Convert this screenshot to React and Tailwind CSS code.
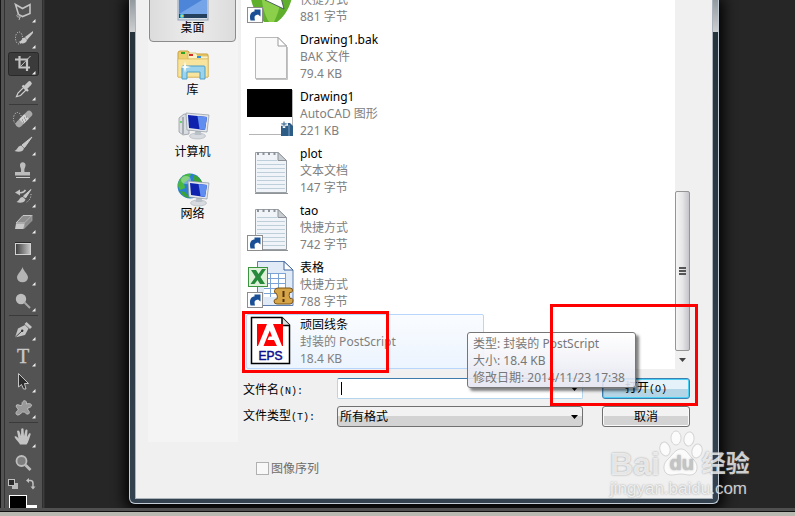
import React, { useState } from 'react';
import clsx from 'clsx';

const UI_FONT = "font-['Noto_Sans','Noto_Sans_CJK_SC',sans-serif]";

/* ---------- Toolbar icons, drawn in a 37x26 cell ---------- */

const TOOL_ICONS = {
  lasso: (
    <>
      <path d="M10.5 5.5 17.5 9.5 25 5.5V14.5L17.5 17.5 13.5 15.5Z" fill="none" stroke="#c4c4c4" strokeWidth="1.6" />
      <path d="M14 15.5c-3 0-3 2.500 0 2.500s3-1 1.500-1.500M15 18l-1 3" fill="none" stroke="#b4b4b4" />
    </>
  ),
  quickSelect: (
    <>
      <ellipse cx="14" cy="13" rx="3.500" ry="6" fill="none" stroke="#d8d8d8" strokeDasharray="1 1.500" />
      <path d="M28 6 20 12l2 3 6-7Z" fill="#c9c9c9" />
      <path d="M20 12.500c-3 0-3 3.500-6.500 4.500 3 2.500 8 1.500 8.500-2Z" fill="#c9c9c9" />
    </>
  ),
  crop: (
    <>
      <path d="M14.500 5V16.500H25M10 8.500H22V20" fill="none" stroke="#c4c4c4" strokeWidth="2.200" />
      <path d="M15.500 15.500 25.500 5" stroke="#c4c4c4" />
    </>
  ),
  eyedropper: (
    <>
      <path d="M11.500 19.500 13 16l6-6 2.500 2.500-6 6Z" fill="#4a4a4a" stroke="#cfcfcf" strokeWidth="1.200" />
      <path d="M17.500 8.500 23 14" stroke="#d0d0d0" strokeWidth="2.200" />
      <path d="M20.500 10.500 24.500 6.500" stroke="#c6c6c6" strokeWidth="4.500" strokeLinecap="round" />
    </>
  ),
  heal: (
    <>
      <ellipse cx="12.500" cy="12.500" rx="4" ry="6" fill="none" stroke="#d8d8d8" strokeDasharray="1 1.500" />
      <path d="M14 18 24 8" stroke="#a8a8a8" strokeWidth="6.500" strokeLinecap="round" />
      <path d="M16.500 15.500 21.500 10.500" stroke="#d4d4d4" strokeWidth="6.500" />
      <path d="M17 14h1M19 12h1M20 14h1M18 16h1M21 11h1" stroke="#6a6a6a" />
    </>
  ),
  brush: (
    <>
      <path d="M27 5 17 13l2.500 2.500Z" fill="#cacaca" stroke="#cacaca" />
      <path d="M16.500 13.500c-4 0-3.500 4-7 5.500 4 1.500 9 1 9.500-3Z" fill="#c4c4c4" />
    </>
  ),
  stamp: (
    <>
      <path d="M15 7.500a2.800 2.800 0 1 1 5.500 0c0 2-1.500 2.500-1 6.500h5.500v3.500H10V14h6c.5-4-1-4.500-1-6.500Z" fill="#bcbcbc" />
      <path d="M11 19.500h14" stroke="#cfcfcf" />
    </>
  ),
  history: (
    <>
      <path d="M14 8.500c3 .5 5 0 6.500-2.500" fill="none" stroke="#c4c4c4" strokeWidth="1.500" />
      <path d="M10 8.500 15 5.500V11.500Z" fill="#c4c4c4" />
      <path d="M26 5.500 18.500 12l2 2Z" fill="#cacaca" stroke="#cacaca" />
      <path d="M18 13c-4 0-3 3.500-6.500 5 3.500 1.500 8 1 9-2.500Z" fill="#c4c4c4" />
      <path d="M26 10q0 6-5 8.500" fill="none" stroke="#d8d8d8" strokeDasharray="1 1.500" />
    </>
  ),
  eraser: (
    <>
      <path d="M18 5.500H27L19.500 13H11Z" fill="#8d8d8d" stroke="#c8c8c8" />
      <path d="M27 5.500V10.500L19 18.500 19.500 13Z" fill="#8a8a8a" stroke="#aaa" strokeWidth=".7" />
      <path d="M11 13.500H19.500L18.500 19H10Z" fill="#c9c9c9" />
    </>
  ),
  gradient: (
    <>
      <defs>
        <linearGradient id="toolGradient">
          <stop stopColor="#3c3c3c" />
          <stop offset="1" stopColor="#c8c8c8" />
        </linearGradient>
      </defs>
      <path d="M10 6.500h16" stroke="#2b2b2b" />
      <rect x="10.500" y="7.500" width="15" height="11" fill="url(#toolGradient)" stroke="#d2d2d2" />
    </>
  ),
  blur: <path d="M17.500 5C16.500 9 12 12 12 15.500a5.500 4.800 0 0 0 11 0C23 12 18.500 9 17.500 5Z" fill="#b4b4b4" />,
  dodge: (
    <>
      <circle cx="16" cy="11" r="5.200" fill="#bcbcbc" />
      <path d="M19.500 14.500 25 20" stroke="#a6a6a6" strokeWidth="2" />
    </>
  ),
  pen: (
    <>
      <path d="M10 20.500 13 11.500 20 8 23.500 11.500 20 18Z" fill="#c4c4c4" />
      <path d="M10 20.500 17 14" stroke="#444" />
      <circle cx="17.200" cy="13.800" r="1.200" fill="#333" />
      <path d="M20.500 6 26 11" stroke="#c4c4c4" strokeWidth="3" />
    </>
  ),
  type: (
    <text x="18" y="19.500" textAnchor="middle" fontFamily="Liberation Serif, serif" fontSize="20" fill="#c8c8c8" stroke="#c8c8c8" strokeWidth=".4">
      T
    </text>
  ),
  arrow: <path d="M13.500 4.500V18L16.500 15.500 18.500 20H21L19.500 14.500H23.500Z" fill="#2c2c2c" stroke="#c4c4c4" />,
  shape: (
    <path
      d="M18 6.500c2-2 4 0 3.500 2.500 3-1 5.500 0 5 2-1 2-4 1-4 3 1 2 3 3 1 5-3 1-3-3-6-2-2 1-2 3-5 3-3-1-1-4 1-5-1-2-3-3-2-5 2-1 3 1 5 .5 1-1 0-3 1.500-4Z"
      fill="#999"
      stroke="#c0c0c0"
    />
  ),
  hand: (
    <path
      d="M15 20.500c-1-3-5-5-5.500-8 1.500-1 3 .5 4 2L12 7c1-1 2-.5 2.500.5L16 12l.2-7c.5-1 2-1 2.300 0L19 12l1.500-6c.6-1 2-.6 2 .6L22 13l2-3.500c1-.8 2 0 1.600 1-1.500 4-2 7.500-4 10Z"
      fill="#c4c4c4"
    />
  ),
  zoom: (
    <>
      <circle cx="16.500" cy="11" r="5" fill="#7e7e7e" stroke="#bdbdbd" strokeWidth="1.800" />
      <path d="M20.500 15 25.500 20" stroke="#bdbdbd" strokeWidth="2.800" />
    </>
  ),
};

const TOOL_GROUPS = [
  [
    ['lasso', '多边形套索'],
    ['quickSelect', '快速选择'],
    ['crop', '裁剪'],
    ['eyedropper', '吸管'],
  ],
  [
    ['heal', '修复画笔'],
    ['brush', '画笔'],
    ['stamp', '仿制图章'],
    ['history', '历史记录画笔'],
    ['eraser', '橡皮擦'],
    ['gradient', '渐变'],
    ['blur', '模糊'],
    ['dodge', '减淡'],
  ],
  [
    ['pen', '钢笔'],
    ['type', '文字'],
    ['arrow', '路径选择'],
    ['shape', '自定形状'],
  ],
  [
    ['hand', '抓手'],
    ['zoom', '缩放'],
  ],
];

function ToolBar() {
  const [active, setActive] = useState('crop');
  return (
    <aside className="flex shrink-0 overflow-hidden border-l border-[#161616] bg-[#535353]">
      <div className="w-[4px] border-r border-[#333]"></div>
      <div className="-mt-px w-[37px]">
        {TOOL_GROUPS.map((group, i) => (
          <div key={i}>
            {i > 0 && <div className="mx-1 my-px h-px bg-[#3a3a3a]"></div>}
            {group.map(([id, label]) => (
              <button key={id} type="button" aria-label={label} onClick={() => setActive(id)} className="block h-[26px] w-full">
                <svg viewBox="0 0 37 26" className="block h-[26px] w-full">
                  {active === id && <rect x="3.500" y="1.500" width="30" height="23" rx="2" fill="#3b3b3b" stroke="#292929" />}
                  {TOOL_ICONS[id]}
                  {id !== 'zoom' && <path d="M27 23.500 30.500 20V23.500Z" fill="#eee" />}
                </svg>
              </button>
            ))}
          </div>
        ))}
        <svg viewBox="0 0 37 40" className="block h-[40px] w-full">
          <rect x="7" y="7" width="6" height="6" fill="#b8b8b8" />
          <rect x="3.500" y="3.500" width="6" height="6" fill="#2a2a2a" stroke="#c0c0c0" />
          <path d="M23 4.500h2.500q2.500 0 2.500 3v4" fill="none" stroke="#c0c0c0" strokeWidth="1.500" />
          <path d="M21 4.500 24 2v5ZM25.500 10.500h5L28 13.500Z" fill="#c0c0c0" />
          <rect x="22" y="29" width="10" height="11" fill="#fff" />
          <rect x="4.500" y="19.500" width="17" height="20" fill="#000" stroke="#fff" />
        </svg>
      </div>
      <div className="w-[3px] border-x border-[#303030] bg-[#3c3c3c]"></div>
    </aside>
  );
}

/* ---------- Places bar ---------- */

function Screen({ x, y, w = 19, h = 16 }) {
  return (
    <g transform={`translate(${x} ${y})`}>
      <ellipse cx={w / 2} cy={h + 6} rx="8" ry="3" fill="#d7dbe0" stroke="#a9afb6" strokeWidth=".6" />
      <path d={`M${w / 2 - 2} ${h}h5l1 5h-7Z`} fill="#b9c0c7" />
      <path d={`M0 0 ${w} 2 ${w - 2} ${h + 2} 1 ${h}Z`} fill="#e4e8ec" stroke="#8e969e" strokeWidth=".7" />
      <path d={`M2 2 ${w - 2} 4 ${w - 4} ${h} 3 ${h - 2}Z`} fill="#0f22ae" />
      <path d={`M${w / 2} 3 ${w - 2} 4 ${w - 4} ${h} ${w / 2 + 2} ${h - 1}Z`} fill="#5f8df0" />
    </g>
  );
}

const PLACES = [
  {
    label: '桌面',
    icon: (
      <>
        <rect x="1" y="4" width="30" height="29" fill="#d5dde6" stroke="#93a2b4" />
        <rect x="2" y="5" width="28" height="23" fill="#4d85d8" />
        <path d="M2 27 30 10V27Z" fill="#75a5e8" />
        <rect x="2" y="27" width="28" height="4" fill="#25405f" />
        <circle cx="5" cy="29" r="2.200" fill="#45c0d8" />
        <circle cx="5" cy="29" r="1" fill="#f3d44c" />
      </>
    ),
  },
  {
    label: '库',
    icon: (
      <>
        <path d="M1 4q0-2 2-2h8l2 3h17q1 0 1 1v22H1Z" fill="#eccf6f" stroke="#c99f3c" />
        <path d="M11 4h8l2 3h10v3H11Z" fill="#fbf2c6" stroke="#c9a94c" strokeWidth=".6" />
        <rect x="4" y="3" width="4" height="2" fill="#2aa52a" />
        <rect x="12" y="5" width="4" height="2" fill="#d0302c" />
        <rect x="20" y="7" width="4" height="2" fill="#2c8fe0" />
        <path d="M1 10h30v18H1Z" fill="#f8e49c" stroke="#d8b758" strokeWidth=".6" />
        <path d="M5 18q0-1 1-1h21q1 0 1 1v12h-5v-7H10v7H5Z" fill="#9bd3ec" stroke="#4f9fc6" />
        <path d="M8 12l1 5 5 1-5 1-1 5-1-5-4-1 4-1Z" fill="#fff" />
      </>
    ),
  },
  {
    label: '计算机',
    icon: (
      <>
        <path d="M2 7 7 3l5 1v19l-6 1-4-3Z" fill="#d9dde1" stroke="#8a9097" strokeWidth=".7" />
        <path d="M6 6v17" stroke="#777f87" />
        <circle cx="4" cy="11" r="1" fill="#3cd23c" />
        <Screen x={9} y={2} w={23} h={17} />
      </>
    ),
  },
  {
    label: '网络',
    icon: (
      <>
        <circle cx="13" cy="13" r="12.500" fill="#2c7fd0" />
        <path d="M3 6Q8 0 14 1l-2 5-5 4 1 5-5 2Q-1 12 3 6Z" fill="#48b840" />
        <path d="M17 2q6 2 8 7l-6 1-3-4ZM3 18l5 1 5 6Q6 25 3 18Z" fill="#3ba237" />
        <ellipse cx="9" cy="7" rx="5" ry="4" fill="#fff" opacity=".35" />
        <Screen x={11} y={8} w={21} h={16} />
      </>
    ),
  },
];

function PlacesBar() {
  const [place, setPlace] = useState('桌面');
  return (
    <nav className="mb-[56px] w-[90px] shrink-0 overflow-hidden bg-[#f4f4f4] pr-[2px] pl-px">
      <div className="-mt-5">
        {PLACES.map((p) => (
          <button
            key={p.label}
            type="button"
            onClick={() => setPlace(p.label)}
            className={clsx(
              'flex h-[62px] w-full flex-col items-center rounded-sm border pt-[6px]',
              place === p.label ? 'border-[#8b8b8b] bg-gradient-to-r from-[#dcdcdc] via-[#ececec] to-[#dcdcdc]' : 'border-transparent'
            )}
          >
            <svg viewBox="0 0 32 32" className="size-8 shrink-0 overflow-visible">
              {p.icon}
            </svg>
            <span className="text-[12px] leading-[17px]">{p.label}</span>
          </button>
        ))}
      </div>
    </nav>
  );
}

/* ---------- File list ---------- */

function ShortcutArrow() {
  return (
    <g>
      <rect x=".5" y="31.500" width="15" height="15" fill="#fdfdfd" stroke="#8d8d8d" />
      <path d="M3.500 44.500C2 39 4 35.500 7.500 35.500V33.500H13.500V40.500L11 38.500C7.500 39 7 41 8 44.500Z" fill="#1a4f96" />
    </g>
  );
}

function NotePad() {
  return (
    <g>
      <path d="M8.500 5.500H31L39.500 14V45.500H8.500Z" fill="#f0f4f8" stroke="#9aa0a6" />
      <path d="M10 13.500H30M10 17.500H38M10 21.500H38M10 25.500H38M10 29.500H38M10 33.500H38M10 37.500H38M10 41.500H38" stroke="#bccfdb" />
      <path d="M31 5.500V13.500H39.500Z" fill="#c9ced3" stroke="#8c9298" />
      <path d="M10 6.500H30" stroke="#8c9298" strokeWidth="3" strokeDasharray="2 3.500" />
      <path d="M8 46.500H41" stroke="#8f9499" />
    </g>
  );
}

const FILES = [
  {
    name: 'CorelDRAW',
    type: '快捷方式',
    size: '881 字节',
    icon: (
      <>
        <path d="M3 16H46C44 32 36 42 30 46H17C10 40 4 30 3 16Z" fill="#5fae2c" />
        <path d="M14 16C15 32 19 42 22 46H27C31 38 34 28 35 16Z" fill="#8bcf4b" />
        <path d="M18 24 37 33 33 18Z" fill="#fff" stroke="#345" strokeWidth=".8" />
        <ShortcutArrow />
      </>
    ),
  },
  {
    name: 'Drawing1.bak',
    type: 'BAK 文件',
    size: '79.4 KB',
    icon: (
      <>
        <path d="M8.500 4.500H31L39.500 13V45.500H8.500Z" fill="#f9f9f9" stroke="#b8b8b8" />
        <path d="M31 4.500V13H39.500Z" fill="#fff" stroke="#9b9b9b" />
        <path d="M9 46.500H40.500V14" fill="none" stroke="#c4c4c4" />
      </>
    ),
  },
  {
    name: 'Drawing1',
    type: 'AutoCAD 图形',
    size: '221 KB',
    icon: (
      <>
        <path d="M2 44.500H34M45.500 0V44" stroke="#b5b5b5" />
        <rect x="0" y="-1" width="45" height="28" fill="#000" />
        <path d="M34 33H43L46 36V46H34Z" fill="#2d5c87" />
        <path d="M37 31v7M34 34.500h7" stroke="#fff" strokeWidth="2.500" />
        <path d="M37 31.500v5M34.500 34h5" stroke="#2d5c87" />
        <path d="M42 35V46" stroke="#7da3c4" />
      </>
    ),
  },
  { name: 'plot', type: '文本文档', size: '147 字节', icon: <NotePad /> },
  {
    name: 'tao',
    type: '快捷方式',
    size: '742 字节',
    icon: (
      <>
        <NotePad />
        <ShortcutArrow />
      </>
    ),
  },
  {
    name: '表格',
    type: '快捷方式',
    size: '788 字节',
    icon: (
      <>
        <path d="M10.500.5H37L46 9V44.500H10.500Z" fill="#e1ebf8" stroke="#5c7faf" />
        <path d="M37 .5V9H46Z" fill="#fff" stroke="#3f649b" />
        <rect x="17" y="12" width="22" height="24" fill="#fff" />
        <path d="M17 12.500H39M17 17.500H39M17 22.500H39M17 27.500H39M17 32.500H39M23.500 12V36M31.500 12V36M38.500 12V36" stroke="#7ba3d6" />
        <path d="M31 27h12q3 0 2.500 3-.5 2-3 1.500-1 3 .5 6 3-1 3 2.500-.5 3-3 3H30q-3 0-3-3 .5-2.500 3-2 1-3-.5-5.500-2.500 0-2-3 .5-2.500 3.500-2.500Z" fill="#d6a548" stroke="#7d5315" />
        <path d="M36.500 30v6M36.500 38v3" stroke="#54350a" strokeWidth="2" />
        <rect x="1.500" y="6.500" width="19" height="19" fill="#dff0d8" stroke="#3c9440" />
        <path d="M4 9H9L11.500 13 15 8H19L13.500 16 18 23H13L10.500 19 7.500 23H3.500L8.500 16Z" fill="#27893a" />
        <ShortcutArrow />
      </>
    ),
  },
  {
    name: '顽固线条',
    type: '封装的 PostScript',
    size: '18.4 KB',
    icon: (
      <>
        <path d="M4.500-.5H35L42.500 7V45.500H4.500Z" fill="#fff" stroke="#000" strokeWidth="1.500" />
        <path d="M35-.5V7.500H43" fill="#ddd" stroke="#000" strokeWidth="1.500" />
        <rect x="10" y="6" width="26" height="22" fill="#f00" />
        <path d="M20 6H26L35 28H30L27 22H20.500L22 18.500H25L22.800 12.500 16.500 28H11Z" fill="#fff" />
        <text x="23.500" y="42" textAnchor="middle" fontFamily="Liberation Sans, sans-serif" fontSize="12" stroke="#10108c" strokeWidth=".5" fill="#10108c">
          EPS
        </text>
      </>
    ),
  },
];

function FileList() {
  const [selected, setSelected] = useState('顽固线条');
  return (
    <div className="flex min-h-0 flex-1 bg-white">
      <ul className="ml-[5px] flex min-h-0 flex-1 flex-col justify-end gap-[2px] overflow-hidden">
        {FILES.map((f) => (
          <li key={f.name} className="shrink-0">
            <button
              type="button"
              onClick={() => setSelected(f.name)}
              className={clsx(
                'flex h-[55px] w-[238px] items-center gap-[5px] rounded-xs border text-left text-[12px] leading-[17px]',
                selected === f.name ? 'border-[#b8d6fb] bg-gradient-to-b from-[#fafcff] to-[#ecf4fe]' : 'border-transparent'
              )}
            >
              <svg viewBox="0 0 48 48" className="size-12 shrink-0 overflow-visible">
                {f.icon}
              </svg>
              <span className="text-[#808080]">
                <span className="block text-black">{f.name}</span>
                <span className="block">{f.type}</span>
                <span className="block">{f.size}</span>
              </span>
            </button>
          </li>
        ))}
      </ul>
      {/* Scroll bar */}
      <div className="flex w-[15px] shrink-0 flex-col justify-end bg-[#f0f0f0]">
        <div className="flex h-[160px] flex-col items-center justify-center gap-px rounded-xs border border-[#959595] bg-gradient-to-r from-[#f5f5f5] via-[#e6e6e8] to-[#c4c4ca]">
          <i className="h-[2px] w-[7px] bg-[#555]"></i>
          <i className="h-[2px] w-[7px] bg-[#555]"></i>
          <i className="h-[2px] w-[7px] bg-[#555]"></i>
        </div>
        <button type="button" aria-label="向下滚动" className="flex h-[18px] items-center justify-center">
          <svg viewBox="0 0 7 4" className="h-1 w-[7px]">
            <path d="M0 0H7L3.500 4Z" fill="#444" />
          </svg>
        </button>
      </div>
    </div>
  );
}

/* ---------- Bottom form ---------- */

function Mono({ children }) {
  return <span className="font-['Liberation_Mono',monospace] text-[10px]">{children}</span>;
}

function DownArrow() {
  return (
    <svg viewBox="0 0 7 4" className="h-1 w-[7px]">
      <path d="M0 0H7L3.500 4Z" fill="#000" />
    </svg>
  );
}

function OpenForm() {
  const [fileName, setFileName] = useState('');
  return (
    <form onSubmit={(e) => e.preventDefault()} className="flex flex-col gap-[7px] pt-[9px] pl-[2px] text-[12px] leading-[17px]">
      <div className="flex h-[21px] items-center">
        <label htmlFor="file-name" className="w-[94px] pt-[3px]">
          文件名<Mono>(N):</Mono>
        </label>
        <div className="relative min-w-0 flex-1">
          <input
            id="file-name"
            type="text"
            value={fileName}
            onChange={(e) => setFileName(e.target.value)}
            className="block h-[21px] w-full rounded-xs border border-[#b5d5ec] border-t-[#3d7bad] bg-white px-1 outline-none"
          />
          {fileName === '' && <i className="pointer-events-none absolute top-1 left-1 h-[13px] w-px bg-black"></i>}
          <button type="button" aria-label="历史文件名" className="absolute inset-y-0 right-0 flex w-[17px] items-center justify-center">
            <DownArrow />
          </button>
        </div>
        <button
          type="submit"
          className="ml-[19px] h-[21px] w-[88px] rounded-[3px] border border-[#3c7fb1] bg-gradient-to-b from-[#e6f2f9] from-50% to-[#b4d5e6] to-50% leading-[17px] ring-1 ring-[#48d1f5] ring-inset"
        >
          打开<Mono>(O)</Mono>
        </button>
      </div>
      <div className="flex h-[21px] items-center">
        <label htmlFor="file-type" className="w-[94px]">
          文件类型<Mono>(T):</Mono>
        </label>
        <div className="relative min-w-0 flex-1">
          <select
            id="file-type"
            className="block h-[21px] w-full appearance-none rounded-[3px] border border-[#707070] bg-gradient-to-b from-[#f2f2f2] from-50% to-[#d3d3d3] to-50% px-[2px] outline-none"
          >
            <option>所有格式</option>
          </select>
          <span className="pointer-events-none absolute inset-y-0 right-0 flex w-[17px] items-center justify-center">
            <DownArrow />
          </span>
        </div>
        <button
          type="button"
          className="ml-[19px] h-[21px] w-[88px] rounded-[3px] border border-[#707070] bg-gradient-to-b from-[#f2f2f2] from-50% to-[#d3d3d3] to-50% leading-[17px] ring-1 ring-[#fafafa] ring-inset"
        >
          取消
        </button>
      </div>
      <div className="mt-[26px] mb-[21px] flex items-center gap-[2px] pl-[13px] text-[#6d6d6d]">
        <input
          id="sequence"
          type="checkbox"
          disabled
          className="size-[13px] appearance-none border border-[#b1b1b1] bg-[#f8f8f8]"
        />
        <label htmlFor="sequence">图像序列</label>
      </div>
    </form>
  );
}

function OpenDialog() {
  return (
    <section className="mr-[76px] mb-1 ml-[84px] flex min-h-0 min-w-0 flex-1 rounded-b-md border-x border-b border-[#c3ccd4] bg-[linear-gradient(#929a9f,#cdcfd1_32px,#26323c_32px,#34424f)] px-[5px] pb-[4px] shadow-[0_2px_14px_4px_#000]">
      <div className="flex min-w-0 flex-1 border-x border-b border-[#aab3bc] bg-[#f0f0f0] pr-[22px] pl-3">
        <PlacesBar />
        <div className="ml-[3px] flex min-h-0 min-w-0 flex-1 flex-col">
          <FileList />
          <OpenForm />
        </div>
      </div>
    </section>
  );
}

/* ---------- Overlays ---------- */

function FileTip() {
  return (
    <div className="absolute top-[332px] left-[467px] w-[169px] rounded-[3px] border border-[#767676] bg-gradient-to-b from-white/90 to-[#e4e5f0]/90 px-[5px] pt-[2px] pb-px text-[12px] leading-[17px] whitespace-nowrap text-[#777] shadow-[3px_3px_3px_rgba(0,0,0,0.5)]">
      <p>类型: 封装的 PostScript</p>
      <p>大小: 18.4 KB</p>
      <p>修改日期: 2014/11/23 17:38</p>
    </div>
  );
}

function Watermark() {
  return (
    <div className="absolute top-[430px] left-[610px] font-['Liberation_Sans','Noto_Sans_CJK_SC',sans-serif] whitespace-nowrap text-white/75 [text-shadow:0_0_2px_rgba(90,90,90,0.6)]">
      <div className="flex h-[49px] items-end leading-[28px]">
        <span className="text-[32px] leading-[30px] font-bold">Bai</span>
        <span className="relative ml-[2px] flex h-[49px] w-[40px] items-end justify-center">
          <svg viewBox="0 0 40 49" className="absolute inset-0 h-full w-full overflow-visible">
            <g fill="#fff" fillOpacity=".75" stroke="#999" strokeOpacity=".35">
              <ellipse cx="3" cy="19" rx="5" ry="7" transform="rotate(-15 3 19)" />
              <ellipse cx="14" cy="8" rx="5" ry="7" />
              <ellipse cx="27" cy="9" rx="5" ry="7" transform="rotate(10 27 9)" />
              <ellipse cx="35" cy="21" rx="5" ry="7" transform="rotate(15 35 21)" />
              <path d="M19 19c6 0 8 7 13 11 5 5 4 15-4 15-4 0-5-1-9-1s-6 1-10 1C1 45 0 35 5 30c5-4 8-11 14-11Z" />
            </g>
          </svg>
          <span className="relative text-[20px] leading-[32px] font-bold text-[#c4c4c4]">du</span>
        </span>
        <span className="text-[24px] leading-[30px] font-bold">经验</span>
      </div>
      <p className="text-[17px] leading-[19px]">jingyan.baidu.com</p>
    </div>
  );
}

export default function App() {
  return (
    <div className={clsx('relative flex h-screen flex-col overflow-hidden bg-[#262626] text-black', UI_FONT)}>
      <main className="flex min-h-0 flex-1">
        <ToolBar />
        <OpenDialog />
      </main>
      <footer className="h-2 shrink-0 border-t-[3px] border-[#505050] bg-[#b9b9b1]">
        <div className="h-px bg-[#111]"></div>
      </footer>

      <FileTip />
      {/* Highlight frames */}
      <div className="pointer-events-none absolute top-[311px] left-[242px] h-[62px] w-[147px] border-3 border-[#f00]"></div>
      <div className="pointer-events-none absolute top-[304px] left-[550px] h-[102px] w-[148px] border-3 border-[#f00]"></div>
      <Watermark />
    </div>
  );
}
